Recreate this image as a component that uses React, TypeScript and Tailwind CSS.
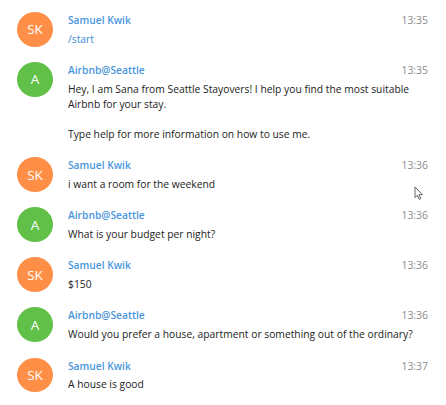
const messages = [
  { me: true, time: "13:35", lines: ["/start"], height: "h-[50.2px]", link: true },
  {
    me: false,
    time: "13:35",
    lines: [
      "Hey, I am Sana from Seattle Stayovers! I help you find the most suitable",
      "Airbnb for your stay.",
      "",
      "Type help for more information on how to use me.",
    ],
    height: "h-[95.1px]",
  },
  { me: true, time: "13:36", lines: ["i want a room for the weekend"], height: "h-[50px]" },
  { me: false, time: "13:36", lines: ["What is your budget per night?"], height: "h-[50.1px]" },
  { me: true, time: "13:36", lines: ["$150"], height: "h-[50px]" },
  { me: false, time: "13:36", lines: ["Would you prefer a house, apartment or something out of the ordinary?"], height: "h-[50.2px]" },
  { me: true, time: "13:37", lines: ["A house is good"], height: "h-[50px]" },
];

function Message({ m }: { m: (typeof messages)[number] }) {
  return (
    <div className={`flex shrink-0 items-start ${m.height}`}>
      <div
        className={`mr-[15px] flex h-[34.5px] w-9 shrink-0 items-center justify-center rounded-[50%] text-[13.5px] leading-[18px] text-white ${
          m.me ? "bg-[#ff8f47]" : "bg-[#60c047]"
        }`}
      >
        {m.me ? "SK" : "A"}
      </div>
      <div className="min-w-0 flex-1">
        <div className="flex h-[18.8px] justify-between leading-[16px]">
          <span className="origin-left scale-x-[0.93] text-[11px] font-semibold text-[#4a96dc]">{m.me ? "Samuel Kwik" : "Airbnb@Seattle"}</span>
          <span className="origin-right scale-x-[0.95] text-[11px] text-[#8c8c8c]">{m.time}</span>
        </div>
        {m.lines.map((line, i) => (
          <p key={i} className={`h-[15.1px] w-max origin-left scale-x-[0.936] whitespace-nowrap text-[11px] leading-[15px] ${m.link ? "text-[#3b8ad0]" : "text-[#222222]"}`}>
            {line}
          </p>
        ))}
      </div>
    </div>
  );
}

export default function App() {
  return (
    <main className="relative flex h-[405px] w-[446px] flex-col overflow-hidden bg-white pt-3 pr-[18px] pl-[17px] font-['Open_Sans',sans-serif]">
      {messages.map((m, i) => (
        <Message key={i} m={m} />
      ))}
      <svg className="absolute top-[186px] left-[414px]" width="10" height="15" viewBox="0 0 10 15" fill="white" stroke="#555158" strokeWidth="0.9">
        <path d="M1 1v10.5l2.4-2.2 1.7 4 1.6-.7-1.7-3.9h3.4z" />
      </svg>
    </main>
  );
}
